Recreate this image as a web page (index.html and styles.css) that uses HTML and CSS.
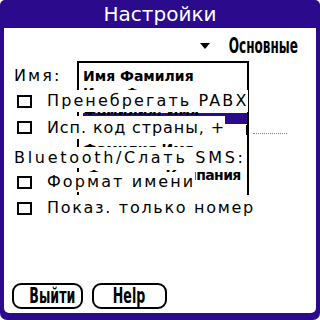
FILE: index.html
```html
<!DOCTYPE html>
<html>
<head>
<meta charset="utf-8">
<link rel="stylesheet" href="styles.css">
</head>
<body>
<div class="screen">
    <div class="title">Настройки</div>
    <div class="panel">
        <div class="head">
            <span class="arrow"></span>
            <span class="pick">Основные</span>
        </div>
        <div class="name-row"><span class="lab">Имя:</span></div>

        <div class="row r1"><span class="fill"><span class="cb"></span>Пренебрегать PABX</span></div>
        <div class="row r2"><span class="fill"><span class="cb"></span>Исп. код страны, +</span></div>
        <div class="row bt"><span class="fill">Bluetooth/Слать SMS:</span></div>
        <div class="row r3"><span class="fill"><span class="cb"></span>Формат имени</span></div>
        <div class="row r4"><span class="fill"><span class="cb"></span>Показ. только номер</span></div>

        <!-- popup list left half-drawn under the form -->
        <div class="list">
            <div class="item">Имя Фамилия</div>
            <div class="item">Имя, Фамилия</div>
            <div class="item short">Фамилия, Имя</div>
            <div class="item sel"></div>
            <div class="item">Фамилия Имя</div>
            <div class="item">Фамилия Имя</div>
            <div class="item low">Фамилия, Компания</div>
            <div class="knob"></div>
        </div>
        <div class="dots"></div>

        <div class="buttons">
            <button class="btn exit"><span>Выйти</span></button>
            <button class="btn help"><span>Help</span></button>
        </div>
    </div>
</div>
</body>
</html>
```

FILE: styles.css
```css
body {
    margin: 0;
    background: #fff;
}

.screen {
    width: 320px;
    height: 320px;
    background: #2c0a8c;
    border-radius: 5px 5px 7px 7px;
    display: flex;
    flex-direction: column;
    font-family: "DejaVu Sans", sans-serif;
    color: #000;
}

.title {
    height: 28px;
    line-height: 28px;
    text-align: center;
    color: #fff;
    font-size: 20px;
}

.panel {
    position: relative;
    flex: 1;
    margin: 0 4px 7px;
    background: #fff;
    border-radius: 0 0 5px 5px;
    display: flex;
    flex-direction: column;
}

.head {
    height: 30px;
    display: flex;
    justify-content: flex-end;
    align-items: center;
    padding: 6px 18px 0 0;
    box-sizing: border-box;
}

.arrow {
    width: 0;
    height: 0;
    border-left: 5px solid transparent;
    border-right: 5px solid transparent;
    border-top: 6px solid #000;
    margin-right: -38px;
}

.pick {
    display: inline-block;
    font-weight: bold;
    font-size: 22px;
    line-height: 22px;
    transform: scaleX(0.55);
    transform-origin: right center;
}

.name-row {
    height: 32px;
    padding: 8px 0 0 10px;
    box-sizing: border-box;
}

.lab,
.fill {
    font-size: 16px;
    letter-spacing: 2.1px;
    line-height: 20px;
}

.row {
    position: relative;
    z-index: 1;
    display: flex;
}

.fill {
    display: flex;
    align-items: center;
    background: #fff;
    padding-left: 13px;
}

.r1 .fill { height: 22px; }
.r2 { margin-top: 4px; }
.r2 .fill { height: 23px; letter-spacing: 0.9px; }
.bt { margin-top: 8px; }
.bt .fill { height: 21px; padding-left: 10px; letter-spacing: 2.7px; }
.r3 { margin-top: 4px; }
.r3 .fill { height: 20px; }
.r4 { margin-top: 5px; }
.r4 .fill { height: 22px; letter-spacing: 1.7px; }

.cb {
    width: 11px;
    height: 9px;
    border: 2px solid #000;
    margin-right: 15px;
}

.list {
    position: absolute;
    left: 73px;
    top: 33px;
    width: 172px;
    height: 134px;
    box-sizing: border-box;
    border: 2px solid #000;
    border-bottom: none;
    padding-top: 5px;
    background: #fff;
    overflow: hidden;
}

.item {
    height: 17px;
    line-height: 17px;
    padding-left: 4px;
    font-size: 14px;
    font-weight: bold;
    white-space: nowrap;
}

.item.short { height: 11px; }
.item.sel {
    height: 11px;
    background: #2c0a8c;
    margin-left: 4px;
}
.item.low { margin-top: 9px; padding-left: 8px; letter-spacing: -0.6px; }

.knob {
    position: absolute;
    right: -2px;
    top: 62px;
    width: 3px;
    height: 10px;
    background: #000;
}

.dots {
    position: absolute;
    left: 249px;
    top: 105px;
    width: 34px;
    border-top: 1px dotted #888;
}

.buttons {
    margin-top: auto;
    display: flex;
    gap: 9px;
    padding: 0 0 4px 8px;
}

.btn {
    height: 26px;
    border: 2px solid #000;
    border-radius: 9px;
    background: #fff;
    padding: 0;
    font-family: "DejaVu Sans", sans-serif;
    font-weight: bold;
    font-size: 21px;
    line-height: 21px;
    color: #000;
}

.btn span {
    display: inline-block;
    transform: scaleX(0.6);
}

.exit { width: 71px; }
.help { width: 75px; }
```
